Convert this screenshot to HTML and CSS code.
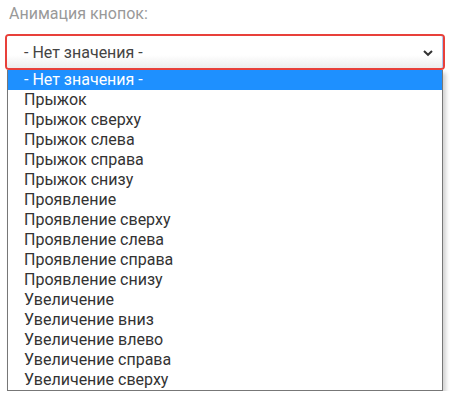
FILE: index.html
```html
<!DOCTYPE html>
<html lang="ru">
<head>
    <meta charset="UTF-8">
    <title>Анимация кнопок</title>
    <link rel="stylesheet" href="styles.css">
</head>
<body>
    <div class="form-item">
        <label class="label">Анимация кнопок:</label>
        <div class="select-wrap">
            <div class="select">
                <span>- Нет значения -</span>
                <svg class="chevron" width="12" height="8" viewBox="0 0 12 8">
                    <path d="M2 2 L6 5.8 L10 2" fill="none" stroke="#333" stroke-width="2"/>
                </svg>
            </div>
        </div>
        <ul class="options">
            <li class="option selected">- Нет значения -</li>
            <li class="option">Прыжок</li>
            <li class="option">Прыжок сверху</li>
            <li class="option">Прыжок слева</li>
            <li class="option">Прыжок справа</li>
            <li class="option">Прыжок снизу</li>
            <li class="option">Проявление</li>
            <li class="option">Проявление сверху</li>
            <li class="option">Проявление слева</li>
            <li class="option">Проявление справа</li>
            <li class="option">Проявление снизу</li>
            <li class="option">Увеличение</li>
            <li class="option">Увеличение вниз</li>
            <li class="option">Увеличение влево</li>
            <li class="option">Увеличение справа</li>
            <li class="option">Увеличение сверху</li>
        </ul>
    </div>
</body>
</html>
```

FILE: styles.css
```css
body {
    margin: 0;
    font-family: Roboto, "Liberation Sans", sans-serif;
    background: #fff;
}
.form-item {
    padding: 4px 6px 0 5px;
    width: 440px;
}
.label {
    display: block;
    font-size: 16px;
    color: #999;
    padding-left: 4px;
    height: 30px;
    line-height: 20px;
}
.select-wrap {
    border: 2px solid #e8403a;
    border-radius: 4px;
    height: 32px;
}
.select {
    height: 32px;
    box-sizing: border-box;
    border-right: 1px solid #a9c6f0;
    border-radius: 2px;
    background: linear-gradient(to bottom, #fff 0%, #fff 60%, #ececec 100%);
    display: flex;
    align-items: center;
    justify-content: space-between;
    padding: 0 8px 0 17px;
    font-size: 16px;
    color: #444;
}
.chevron {
    margin-top: 1px;
}
.options {
    list-style: none;
    margin: 0 0 0 2px;
    padding: 0;
    width: 436px;
    box-sizing: border-box;
    border: 1px solid #777;
    border-top: none;
    box-shadow: 3px 3px 4px rgba(0, 0, 0, 0.18);
    background: #fff;
}
.option {
    height: 20px;
    line-height: 20px;
    font-size: 16px;
    color: #333;
    padding-left: 16px;
}
.option.selected {
    background: #1e90ff;
    color: #fff;
}
```
